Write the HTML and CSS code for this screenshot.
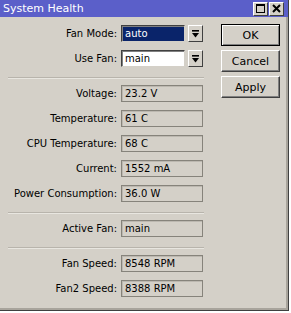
FILE: index.html
```html
<!DOCTYPE html>
<html lang="en">
<head>
  <meta charset="UTF-8" />
  <title>System Health</title>
  <link rel="stylesheet" href="styles.css">
</head>
<body>

  <div class="window">
    <div class="titlebar">
      <span class="title">System Health</span>
      <div class="controls">
        <span class="ctl"><span class="max-box"></span></span>
        <span class="ctl">
          <svg width="9" height="9" viewBox="0 0 9 9"><path d="M1 1 L8 8 M8 1 L1 8" stroke="#000" stroke-width="2"/></svg>
        </span>
      </div>
    </div>

    <div class="content">
      <div class="form">
        <div class="group">
          <div class="row">
            <span class="label">Fan Mode:</span>
            <div class="combo">
              <span class="field edit selected">auto</span>
              <span class="drop"><svg width="7" height="8" viewBox="0 0 7 8"><rect x="0" y="0" width="7" height="1.6" fill="#000"/><path d="M0 3 H7 L3.5 7.5 Z" fill="#000"/></svg></span>
            </div>
          </div>
          <div class="row">
            <span class="label">Use Fan:</span>
            <div class="combo">
              <span class="field edit">main</span>
              <span class="drop"><svg width="7" height="8" viewBox="0 0 7 8"><rect x="0" y="0" width="7" height="1.6" fill="#000"/><path d="M0 3 H7 L3.5 7.5 Z" fill="#000"/></svg></span>
            </div>
          </div>
        </div>

        <div class="sep"></div>

        <div class="group">
          <div class="row"><span class="label">Voltage:</span><span class="field">23.2 V</span></div>
          <div class="row"><span class="label">Temperature:</span><span class="field">61 C</span></div>
          <div class="row"><span class="label">CPU Temperature:</span><span class="field">68 C</span></div>
          <div class="row"><span class="label">Current:</span><span class="field">1552 mA</span></div>
          <div class="row"><span class="label">Power Consumption:</span><span class="field">36.0 W</span></div>
        </div>

        <div class="sep"></div>

        <div class="group">
          <div class="row"><span class="label">Active Fan:</span><span class="field">main</span></div>
        </div>

        <div class="sep"></div>

        <div class="group">
          <div class="row"><span class="label">Fan Speed:</span><span class="field">8548 RPM</span></div>
          <div class="row"><span class="label">Fan2 Speed:</span><span class="field">8388 RPM</span></div>
        </div>
      </div>

      <div class="buttons">
        <button class="btn default">OK</button>
        <button class="btn">Cancel</button>
        <button class="btn">Apply</button>
      </div>
    </div>
  </div>

</body>
</html>
```

FILE: styles.css
```css
* {
  box-sizing: border-box;
  font-family: 'DejaVu Sans', sans-serif;
}

body {
  margin: 0;
  background-color: #ffffff;
}

.window {
  width: 289px;
  height: 311px;
  background-color: #d4d0c8;
  border-right: 1px solid #404040;
  border-bottom: 1px solid #404040;
  box-shadow: inset -2px -2px 0 #a8a49c;
}

.titlebar {
  height: 17px;
  background-color: #5b5fc9;
  display: flex;
  align-items: center;
  justify-content: space-between;
  padding: 0 4px 0 3px;
}

.title {
  color: white;
  font-size: 11px;
}

.controls {
  display: flex;
  gap: 1px;
}

.ctl {
  width: 15px;
  height: 14px;
  background-color: #d4d0c8;
  border: 1px solid;
  border-color: #ffffff #404040 #404040 #ffffff;
  display: flex;
  align-items: center;
  justify-content: center;
}

.max-box {
  width: 9px;
  height: 9px;
  border: 1px solid #000;
  border-top-width: 2px;
}

.content {
  display: flex;
  gap: 17px;
  padding: 8px 0 0 8px;
}

.form {
  width: 196px;
}

.group {
  display: flex;
  flex-direction: column;
  gap: 8px;
}

.row {
  display: flex;
  align-items: center;
  gap: 4px;
  height: 17px;
}

.label {
  width: 109px;
  text-align: right;
  font-size: 10px;
  color: #000;
}

.field {
  width: 82px;
  height: 17px;
  padding: 0 3px;
  font-size: 10px;
  line-height: 15px;
  color: #000;
  border: 1px solid #86837b;
  box-shadow: inset 1px 1px 0 #bcb8b0;
}

.combo {
  display: flex;
  gap: 3px;
}

.field.edit {
  width: 64px;
  background-color: #ffffff;
  border-color: #404040 #d4d0c8 #d4d0c8 #404040;
  box-shadow: inset 1px 1px 0 #808080;
}

.field.selected {
  background-color: #0a246a;
  color: white;
}

.drop {
  width: 15px;
  height: 17px;
  border: 1px solid;
  border-color: #ffffff #404040 #404040 #ffffff;
  display: flex;
  align-items: center;
  justify-content: center;
}

.sep {
  height: 2px;
  margin: 10px 0 6px 0;
  border-top: 1px solid #b8b4ac;
  border-bottom: 1px solid #e8e6e0;
}

.buttons {
  display: flex;
  flex-direction: column;
  gap: 4px;
  margin-top: -1px;
}

.btn {
  width: 59px;
  height: 22px;
  padding: 0;
  background-color: #d4d0c8;
  color: #000;
  font-size: 11px;
  border: 1px solid;
  border-color: #ffffff #404040 #404040 #ffffff;
  box-shadow: inset -1px -1px 0 #808080;
}

.btn.default {
  border: 1px solid #000;
  box-shadow: inset 1px 1px 0 #ffffff, inset -1px -1px 0 #808080;
}
```
